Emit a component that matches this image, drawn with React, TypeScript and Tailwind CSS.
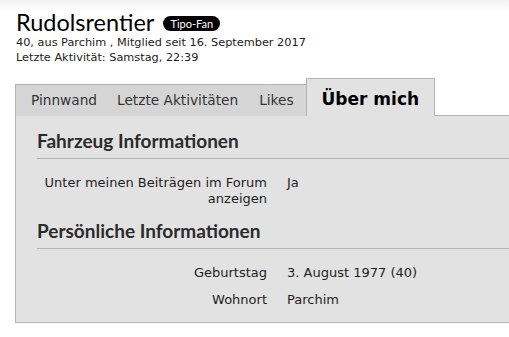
const body = { fontFamily: '"DejaVu Sans", Verdana, sans-serif' };
const head = { fontFamily: 'Lato, "Open Sans", sans-serif' };

function Heading({ text }: { text: string }) {
    return (
        <h2
            style={head}
            className="text-[19px] leading-[22px] font-bold text-[#2b2b2b] pb-[6px] border-b border-[#b3b3b3]"
        >
            {text}
        </h2>
    );
}

function Row({ label, value }: { label: string; value: string }) {
    return (
        <div className="flex gap-[20px] text-[13px] leading-[16px] text-[#1e1e1e]">
            <div className="w-[230px] shrink-0 text-right">{label}</div>
            <div>{value}</div>
        </div>
    );
}

export default function App() {
    return (
        <div
            style={body}
            className="w-[509px] h-[337px] overflow-hidden bg-[linear-gradient(#f2f2f2,#fff_12px)]"
        >
            <div className="pl-[16px] pt-[8px]">
                <div className="flex items-center gap-[9px]">
                    <h1 style={head} className="text-[23.5px] leading-[28px] text-black">
                        Rudolsrentier
                    </h1>
                    <span
                        style={head}
                        className="mt-[3px] bg-black text-white text-[11px] leading-[15px] h-[15px] px-[7px] rounded-full"
                    >
                        Tipo-Fan
                    </span>
                </div>
                <p className="text-[11.3px] leading-[15px] text-[#222] -mt-[1px]">
                    40, aus Parchim , Mitglied seit 16. September 2017
                </p>
                <p className="text-[11.3px] leading-[15px] text-[#222]">
                    Letzte Aktivität: Samstag, 22:39
                </p>
            </div>

            <div className="ml-[15px] mt-[13px] w-[520px]">
                <div className="flex items-end h-[38px]">
                    <div className="flex items-center h-[32px] pl-[5px] bg-[#d5d5d5] border-l border-t border-[#b3b3b3] text-[13.7px] text-[#333]">
                        <span className="px-[10px]">Pinnwand</span>
                        <span className="pl-[10px] pr-[11px]">Letzte Aktivitäten</span>
                        <span className="pl-[10px] pr-[12px]">Likes</span>
                    </div>
                    <div className="h-[38px] px-[15px] pt-[9px] bg-[#e2e2e2] border-l border-t border-r border-[#b3b3b3] text-[17px] font-bold text-black leading-[22px]">
                        Über mich
                    </div>
                    <div className="flex-1 border-b border-[#b3b3b3]" />
                </div>

                <div className="bg-[#e2e2e2] border-l border-b border-[#b3b3b3] pl-[21px] pt-[14px] pb-[14px]">
                    <Heading text="Fahrzeug Informationen" />
                    <div className="pt-[16px] flex flex-col gap-[11px]">
                        <Row label="Unter meinen Beiträgen im Forum anzeigen" value="Ja" />
                    </div>
                    <div className="mt-[13px]">
                        <Heading text="Persönliche Informationen" />
                    </div>
                    <div className="pt-[16px] flex flex-col gap-[11px]">
                        <Row label="Geburtstag" value="3. August 1977 (40)" />
                        <Row label="Wohnort" value="Parchim" />
                    </div>
                </div>
            </div>
        </div>
    );
}
